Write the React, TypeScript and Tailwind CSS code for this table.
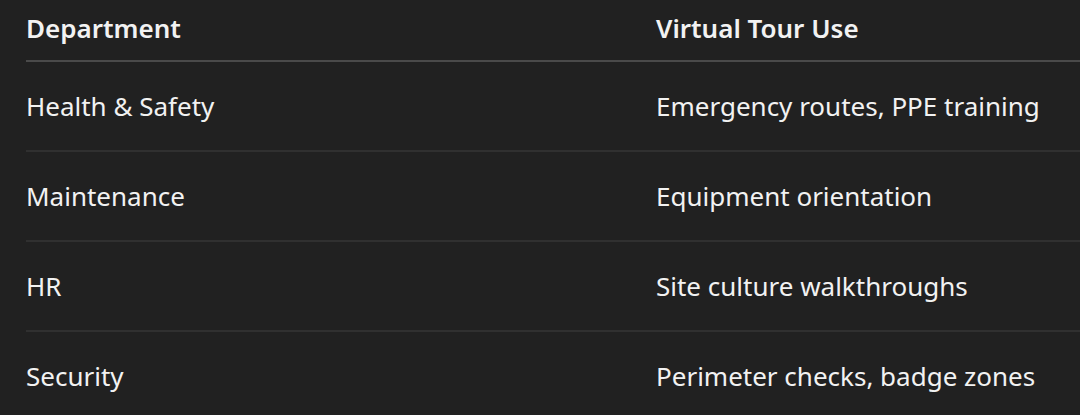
import React from 'react';

const rows = [
    ['Health & Safety', 'Emergency routes, PPE training'],
    ['Maintenance', 'Equipment orientation'],
    ['HR', 'Site culture walkthroughs'],
    ['Security', 'Perimeter checks, badge zones'],
];

export default function App() {
    return (
        <div className="w-[1080px] h-[415px] overflow-hidden bg-[#212121] text-[#f2f2f2] pl-[26px] font-['Noto_Sans',sans-serif]">
            <table className="w-[1260px] border-collapse text-left text-[26px]">
                <thead>
                    <tr className="border-b-2 border-[#4a4a4a]">
                        <th className="w-[630px] h-[61px] p-0 pb-[4px] font-semibold">Department</th>
                        <th className="h-[61px] p-0 pb-[4px] font-semibold">Virtual Tour Use</th>
                    </tr>
                </thead>
                <tbody>
                    {rows.map(([dept, use]) => (
                        <tr key={dept} className="border-b-2 border-[#303030]">
                            <td className="h-[90px] p-0">{dept}</td>
                            <td className="h-[90px] p-0">{use}</td>
                        </tr>
                    ))}
                </tbody>
            </table>
        </div>
    );
}
